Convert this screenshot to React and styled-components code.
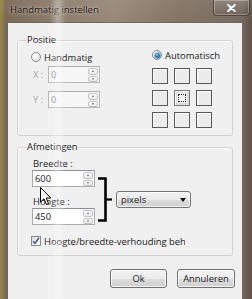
import React from 'react';
import styled, { createGlobalStyle } from 'styled-components';

const Global = createGlobalStyle`
  html, body { margin: 0; padding: 0; width: 252px; height: 299px; overflow: hidden; background: #6e6055; }
  #root { width: 252px; height: 299px; }
  * { box-sizing: border-box; }
`;

const FONT = `"Open Sans", "Noto Sans", "Liberation Sans", sans-serif`;

const Window = styled.div`
  position: relative;
  width: 252px;
  height: 299px;
  overflow: hidden;
  display: flex;
  flex-direction: column;
  padding: 0 9px 0 7px;
  font-family: ${FONT};
  font-size: 9.4px;
  color: #1a1a1a;
  background:
    linear-gradient(180deg, rgba(255,255,255,0.06) 0, rgba(0,0,0,0) 22px),
    linear-gradient(90deg, #948444 0px, #8c7d48 3px, #7a6855 5px, #8a7a6a 20%, #978878 45%, #847464 70%, #766a60 96%, #5e5148 100%);
`;

const TitleBar = styled.div`
  height: 22px;
  display: flex;
  align-items: flex-start;
  margin-left: -2px;
  margin-right: -7px;
`;

const Title = styled.div`
  line-height: 20px;
  font-size: 9.6px;
  color: #161310;
  text-shadow: 0 0 5px rgba(255, 250, 240, 0.55), 0 0 2px rgba(255, 250, 240, 0.5);
  letter-spacing: -0.05px;
`;

const CloseButton = styled.div`
  margin-left: auto;
  width: 37px;
  height: 16px;
  display: flex;
  align-items: center;
  justify-content: center;
  border: 1px solid rgba(60, 50, 40, 0.75);
  border-top: none;
  border-radius: 0 0 4px 4px;
  box-shadow: inset 0 0 0 1px rgba(255, 255, 255, 0.28);
  background: linear-gradient(180deg, rgba(255,255,255,0.12), rgba(0,0,0,0.06));
`;

const Client = styled.div`
  flex: 1;
  background: #f0f0f0;
  border: 1px solid #6f665d;
  border-bottom: none;
  padding: 17px 9px 0 9px;
  display: flex;
  flex-direction: column;
`;

const GroupBox = styled.div`
  position: relative;
  height: ${(p) => p.$h}px;
  margin-top: ${(p) => p.$mt || 0}px;
  border: 1px solid #d3d3d3;
  border-radius: 3px;
  box-shadow: inset 1px 1px 0 #fbfbfb;
  padding: ${(p) => p.$pad};
`;

const Legend = styled.div`
  position: absolute;
  top: -8px;
  left: 8px;
  padding: 0 1px;
  line-height: 13px;
  background: #f0f0f0;
`;

const TwoCols = styled.div`
  display: grid;
  grid-template-columns: 121px 1fr;
`;

const Col = styled.div`
  display: flex;
  flex-direction: column;
  margin-top: ${(p) => p.$mt || 0}px;
`;

const OptionRow = styled.label`
  display: flex;
  align-items: center;
  height: 12px;
  gap: 3px;
  white-space: nowrap;
  margin-top: ${(p) => p.$mt || 0}px;
  margin-left: ${(p) => p.$ml || 0}px;
  width: ${(p) => (p.$w ? p.$w + 'px' : 'auto')};
  overflow: hidden;
`;

const Radio = styled.span`
  position: relative;
  flex: none;
  width: 10px;
  height: 10px;
  border-radius: 50%;
  border: 1px solid #8a8c8e;
  background: radial-gradient(circle at 35% 30%, #ffffff 0, #e4e4e4 70%, #d4d4d4 100%);
  &::after {
    content: '';
    display: ${(p) => (p.$checked ? 'block' : 'none')};
    position: absolute;
    left: 1.5px;
    top: 1.5px;
    width: 5px;
    height: 5px;
    border-radius: 50%;
    background: radial-gradient(circle at 40% 35%, #7fd0f0 0, #2a7fb0 45%, #173f66 100%);
    box-shadow: 0 0 0 1px rgba(90, 150, 190, 0.6);
  }
`;

const SpinRow = styled.div`
  display: flex;
  align-items: center;
  margin-top: ${(p) => p.$mt || 0}px;
`;

const AxisLabel = styled.span`
  width: 17px;
  padding-left: 2px;
  color: #a3a3a3;
`;

const SpinField = styled.div`
  display: flex;
  align-items: stretch;
  width: ${(p) => p.$w}px;
  height: 17px;
  border: 1px solid ${(p) => (p.$disabled ? '#b8b8b8' : '#a9abaf')};
  border-top-color: ${(p) => (p.$disabled ? '#adadad' : '#8d9096')};
  background: ${(p) => (p.$disabled ? '#f6f6f6' : '#ffffff')};
  color: ${(p) => (p.$disabled ? '#8c8c8c' : '#1a1a1a')};
`;

const Value = styled.span`
  flex: 1;
  padding-left: 2px;
  line-height: 15px;
`;

const Spinner = styled.div`
  display: flex;
  flex-direction: column;
  gap: 1px;
  padding: 1px 1px 0 0;
`;

const SpinButton = styled.span`
  width: 10px;
  height: 6.5px;
  display: flex;
  align-items: center;
  justify-content: center;
  border: 1px solid #c4c4c4;
  border-radius: 2px;
  background: linear-gradient(180deg, #fbfbfb, #e8e8e8);
  &::before {
    content: '';
    width: 0;
    height: 0;
    border-left: 1.8px solid transparent;
    border-right: 1.8px solid transparent;
    ${(p) => (p.$dir === 'up' ? 'border-bottom: 2px solid #6a6a6a;' : 'border-top: 2px solid #6a6a6a;')}
  }
`;

const CellGrid = styled.div`
  display: grid;
  grid-template-columns: repeat(3, 16px);
  grid-auto-rows: 16px;
  gap: 6px;
  margin-top: 7px;
`;

const Cell = styled.div`
  position: relative;
  border: 1px solid ${(p) => (p.$active ? '#7b7b7b' : '#5a5a5a')};
  background: ${(p) => (p.$active ? '#f4f4f4' : '#ececec')};
  box-shadow: inset 1px 1px 0 #fafafa${(p) => (p.$active ? ', inset 0 0 0 2px #dcdcdc' : '')};
  &::after {
    content: '';
    display: ${(p) => (p.$active ? 'block' : 'none')};
    position: absolute;
    inset: 3px;
    border: 1px dotted #222;
  }
`;

const FieldLabel = styled.div`
  line-height: 13px;
  height: 13px;
  padding-left: 1px;
  margin-top: ${(p) => p.$mt || 0}px;
`;

const DimRow = styled.div`
  display: flex;
  align-items: flex-start;
`;

const Bracket = styled.svg`
  flex: none;
  margin-left: 2px;
  margin-top: 20px;
`;

const Dropdown = styled.div`
  margin-left: 3px;
  margin-top: 34px;
  width: 75px;
  height: 17px;
  display: flex;
  align-items: center;
  padding: 0 4px 0 4px;
  border: 1px solid #767676;
  border-radius: 3px;
  background: linear-gradient(180deg, #f3f3f3 0, #ebebeb 50%, #dddddd 51%, #d0d0d0 100%);
  box-shadow: inset 0 0 0 1px rgba(255,255,255,0.7);
`;

const DropText = styled.span`
  flex: 1;
  line-height: 15px;
`;

const DropArrow = styled.span`
  width: 0;
  height: 0;
  border-left: 3.5px solid transparent;
  border-right: 3.5px solid transparent;
  border-top: 4px solid #111;
`;

const Checkbox = styled.span`
  flex: none;
  width: 10px;
  height: 10px;
  border: 1px solid #8a8c8e;
  background: linear-gradient(135deg, #dcdcdc, #ffffff);
  display: flex;
  align-items: center;
  justify-content: center;
`;

const ButtonRow = styled.div`
  display: flex;
  justify-content: flex-end;
  gap: 10px;
  margin-top: 13px;
  margin-right: -2px;
`;

const Button = styled.div`
  width: ${(p) => p.$w}px;
  height: 19px;
  display: flex;
  align-items: center;
  justify-content: center;
  border: 1px solid #707070;
  border-radius: 3px;
  background: linear-gradient(180deg, #f2f2f2 0, #ebebeb 50%, #dddddd 51%, #cfcfcf 100%);
  box-shadow: inset 0 0 0 1px rgba(255,255,255,0.75);
`;

const Glare = styled.div`
  position: absolute;
  left: 50px;
  top: 0;
  width: 16px;
  height: 299px;
  pointer-events: none;
  background: linear-gradient(90deg, rgba(255,255,255,0) 0, rgba(255,255,255,0.32) 45%, rgba(255,255,255,0.3) 60%, rgba(255,255,255,0) 100%);
`;

const Cursor = styled.svg`
  position: absolute;
  left: 40px;
  top: 187px;
  pointer-events: none;
`;

function Spin({ value, width, disabled }) {
  return (
    <SpinField $w={width} $disabled={disabled}>
      <Value>{value}</Value>
      <Spinner>
        <SpinButton $dir="up" />
        <SpinButton $dir="down" />
      </Spinner>
    </SpinField>
  );
}

export default function App() {
  const cells = Array.from({ length: 9 }, (_, i) => i);
  return (
    <Window>
      <Global />
      <TitleBar>
        <Title style={{ paddingLeft: 5 }}>Handmatig instellen</Title>
        <CloseButton>
          <svg width="9" height="8" viewBox="0 0 9 8">
            <path d="M1.2 1 L7.8 7 M7.8 1 L1.2 7" stroke="#fff" strokeWidth="2" strokeLinecap="round" />
          </svg>
        </CloseButton>
      </TitleBar>
      <Client>
        <GroupBox $h={96} $pad="10px 0 0 13px">
          <Legend>Positie</Legend>
          <TwoCols>
            <Col>
              <OptionRow>
                <Radio />
                <span>Handmatig</span>
              </OptionRow>
              <SpinRow $mt={3}>
                <AxisLabel>X :</AxisLabel>
                <Spin value="0" width={52} disabled />
              </SpinRow>
              <SpinRow $mt={8}>
                <AxisLabel>Y :</AxisLabel>
                <Spin value="0" width={52} disabled />
              </SpinRow>
            </Col>
            <Col $mt={-2}>
              <OptionRow>
                <Radio $checked />
                <span>Automatisch</span>
              </OptionRow>
              <CellGrid>
                {cells.map((i) => (
                  <Cell key={i} $active={i === 4} />
                ))}
              </CellGrid>
            </Col>
          </TwoCols>
        </GroupBox>

        <GroupBox $h={109} $mt={11} $pad="9px 0 0 14px">
          <Legend>Afmetingen</Legend>
          <DimRow>
            <Col>
              <FieldLabel>Breedte :</FieldLabel>
              <Spin value="600" width={63} />
              <FieldLabel $mt={8}>Hoogte :</FieldLabel>
              <Spin value="450" width={63} />
            </Col>
            <Bracket width="16" height="46" viewBox="0 0 16 46">
              <polyline points="1,1.5 8.5,1.5 8.5,43.5 1,43.5" fill="none" stroke="#000" strokeWidth="2.6" />
              <line x1="8.5" y1="22.5" x2="15" y2="22.5" stroke="#000" strokeWidth="2.2" />
            </Bracket>
            <Dropdown>
              <DropText>pixels</DropText>
              <DropArrow />
            </Dropdown>
          </DimRow>
          <OptionRow $mt={10} $ml={-1} $w={154}>
            <Checkbox>
              <svg width="8" height="8" viewBox="0 0 8 8">
                <path d="M1 4.2 L3 6.4 L7 0.8" fill="none" stroke="#3d5587" strokeWidth="1.5" />
              </svg>
            </Checkbox>
            <span>Hoogte/breedte-verhouding behouden</span>
          </OptionRow>
        </GroupBox>

        <ButtonRow>
          <Button $w={57}>Ok</Button>
          <Button $w={58}>Annuleren</Button>
        </ButtonRow>
      </Client>
      <Glare />
      <Cursor width="12" height="19" viewBox="0 0 12 19">
        <path d="M0.5 0.5 L0.5 15 L4 11.8 L6.5 17.5 L8.6 16.6 L6.2 11 L10.8 11 Z" fill="#fff" stroke="#000" strokeWidth="1" strokeLinejoin="round" />
      </Cursor>
    </Window>
  );
}
